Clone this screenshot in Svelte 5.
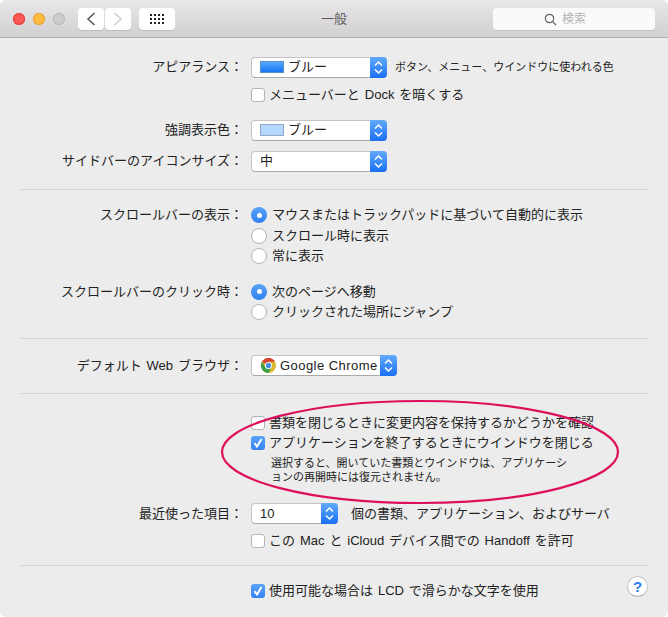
<script>
	const dots = Array.from({ length: 12 });
</script>

{#snippet stepper()}
	<span class="stepper">
		<svg width="9" height="15" viewBox="0 0 9 15" fill="none" stroke="#fff" stroke-width="1.5">
			<path d="M1 5.5 4.5 2 8 5.5M1 9.5 4.5 13 8 9.5" />
		</svg>
	</span>
{/snippet}

{#snippet tick()}
	<svg width="14" height="14" viewBox="0 0 14 14" fill="none" stroke="#fff" stroke-width="2">
		<path d="M3.5 7.2 6 10.5 10.5 3" />
	</svg>
{/snippet}

<div class="window">
	<header class="titlebar">
		<div class="lights">
			<span class="light red"></span>
			<span class="light yellow"></span>
			<span class="light off"></span>
		</div>
		<div class="nav">
			<button class="tool" aria-label="戻る">
				<svg width="10" height="16" viewBox="0 0 10 16" fill="none" stroke="#555" stroke-width="1.5"><path d="M8.5 2 2 8l6.5 6" /></svg>
			</button>
			<button class="tool" aria-label="進む">
				<svg width="10" height="16" viewBox="0 0 10 16" fill="none" stroke="#ccc" stroke-width="1.5"><path d="M1.5 2 8 8l-6.5 6" /></svg>
			</button>
		</div>
		<button class="tool apps" aria-label="すべて表示">
			<span class="dots">
				{#each dots as _}<i></i>{/each}
			</span>
		</button>
		<div class="title">一般</div>
		<div class="search">
			<svg width="13" height="13" viewBox="0 0 13 13" fill="none" stroke="#666" stroke-width="1.2"><circle cx="5.5" cy="5.5" r="4.2" /><path d="M8.6 8.6 12 12" /></svg>
			<span>検索</span>
		</div>
	</header>

	<section class="s1">
		<div class="row">
			<div class="label">アピアランス：</div>
			<div class="control">
				<div class="select w136">
					<span class="swatch blue"></span><span class="value">ブルー</span>
					{@render stepper()}
				</div>
				<span class="hint">ボタン、メニュー、ウインドウに使われる色</span>
			</div>
		</div>
		<div class="row mt6">
			<div></div>
			<label class="control check">
				<span class="box"></span>メニューバーと Dock を暗くする
			</label>
		</div>
		<div class="row mt13">
			<div class="label">強調表示色：</div>
			<div class="control">
				<div class="select w136">
					<span class="swatch pale"></span><span class="value">ブルー</span>
					{@render stepper()}
				</div>
			</div>
		</div>
		<div class="row mt9">
			<div class="label">サイドバーのアイコンサイズ：</div>
			<div class="control">
				<div class="select w136">
					<span class="value">中</span>
					{@render stepper()}
				</div>
			</div>
		</div>
	</section>

	<section class="s2">
		<div class="row tight">
			<div class="label">スクロールバーの表示：</div>
			<div class="control radio"><span class="dot on"></span>マウスまたはトラックパッドに基づいて自動的に表示</div>
		</div>
		<div class="row tight">
			<div></div>
			<div class="control radio"><span class="dot"></span>スクロール時に表示</div>
		</div>
		<div class="row tight">
			<div></div>
			<div class="control radio"><span class="dot"></span>常に表示</div>
		</div>
		<div class="row tight mt15">
			<div class="label">スクロールバーのクリック時：</div>
			<div class="control radio"><span class="dot on"></span>次のページへ移動</div>
		</div>
		<div class="row tight">
			<div></div>
			<div class="control radio"><span class="dot"></span>クリックされた場所にジャンプ</div>
		</div>
	</section>

	<section class="s3">
		<div class="row">
			<div class="label">デフォルト Web ブラウザ：</div>
			<div class="control">
				<div class="select w146">
					<svg class="chrome" width="15" height="15" viewBox="0 0 30 30">
						<circle cx="15" cy="15" r="15" fill="#ddb92c" />
						<path d="M15 15 2 7.5A15 15 0 0 1 28 7.5H15Z" fill="#d8402f" />
						<path d="M2 7.5A15 15 0 0 0 15 30L21.5 18.7 15 15 8.5 18.7Z" fill="#3f9e48" />
						<circle cx="15" cy="15" r="7.2" fill="#fff" />
						<circle cx="15" cy="15" r="5.4" fill="#4a8fe0" />
					</svg>
					<span class="value latin">Google Chrome</span>
					{@render stepper()}
				</div>
			</div>
		</div>
	</section>

	<section class="s4">
		<div class="row tight">
			<div></div>
			<label class="control check"><span class="box"></span>書類を閉じるときに変更内容を保持するかどうかを確認</label>
		</div>
		<div class="row tight">
			<div></div>
			<label class="control check"><span class="box on">{@render tick()}</span>アプリケーションを終了するときにウインドウを閉じる</label>
		</div>
		<div class="row tight">
			<div></div>
			<p class="note">選択すると、開いていた書類とウインドウは、アプリケーションの再開時には復元されません。</p>
		</div>
		<div class="row mt19">
			<div class="label">最近使った項目：</div>
			<div class="control">
				<div class="select w87">
					<span class="value">10</span>
					{@render stepper()}
				</div>
				<span class="after">個の書類、アプリケーション、およびサーバ</span>
			</div>
		</div>
		<div class="row mt5">
			<div></div>
			<label class="control check"><span class="box"></span>この Mac と iCloud デバイス間での Handoff を許可</label>
		</div>
	</section>

	<section class="s5">
		<div class="row">
			<div></div>
			<label class="control check"><span class="box on">{@render tick()}</span>使用可能な場合は LCD で滑らかな文字を使用</label>
		</div>
	</section>

	<button class="help">?</button>

	<svg class="circle" width="668" height="617" viewBox="0 0 668 617" fill="none">
		<ellipse cx="420" cy="452" rx="198" ry="51" stroke="#dd0f5c" stroke-width="2.2" />
	</svg>
</div>

<style>
	:global(body) {
		background: #fff;
	}
	.window {
		position: relative;
		width: 668px;
		height: 617px;
		box-sizing: border-box;
		background: #ececec;
		border-radius: 6px;
		overflow: hidden;
		color: #222;
		font: 13px/20px 'Liberation Sans', 'Noto Sans CJK JP', sans-serif;
		word-spacing: 1.3px;
	}
	.titlebar {
		height: 37px;
		display: flex;
		align-items: center;
		position: relative;
		padding: 0 13px;
		background: linear-gradient(#e9e7e9, #d1cfd1);
		border-bottom: 1px solid #b2b0b2;
	}
	.lights {
		display: flex;
		gap: 8px;
		width: 65px;
	}
	.light {
		width: 12px;
		height: 12px;
		border-radius: 50%;
	}
	.red {
		background: #fc5753;
		box-shadow: inset 0 0 0 1px #e33e3a;
	}
	.yellow {
		background: #fdbc40;
		box-shadow: inset 0 0 0 1px #e0a032;
	}
	.off {
		background: #cdcbcd;
		box-shadow: inset 0 0 0 1px #bbb9bb;
	}
	.nav {
		display: flex;
		gap: 1px;
		margin-right: 8px;
	}
	.tool {
		width: 26px;
		height: 22px;
		padding: 0;
		border: 0;
		border-radius: 4px;
		background: #fff;
		box-shadow: 0 1px 0 #bdbbbd;
		display: flex;
		align-items: center;
		justify-content: center;
	}
	.apps {
		width: 36px;
	}
	.dots {
		display: grid;
		grid-template-columns: repeat(4, 2px);
		gap: 2px 2px;
	}
	.dots i {
		width: 2px;
		height: 2px;
		background: #222;
	}
	.title {
		position: absolute;
		left: 0;
		right: 0;
		text-align: center;
		color: #5c5a5c;
	}
	.search {
		position: absolute;
		left: 493px;
		top: 8px;
		width: 162px;
		height: 22px;
		box-sizing: border-box;
		padding-right: 18px;
		border-radius: 4px;
		background: #fbfafb;
		box-shadow: 0 1px 0 #c2c0c2;
		display: flex;
		align-items: center;
		justify-content: center;
		gap: 5px;
		font-size: 12px;
		color: #b5b5b5;
	}
	section {
		margin: 0 20px;
		border-bottom: 1px solid #d5d5d5;
	}
	.s1 {
		padding: 18px 0 17px;
	}
	.s2 {
		padding: 15px 0 15px;
	}
	.s3 {
		padding: 16px 0 16px;
	}
	.s4 {
		padding: 19px 0 13px;
	}
	.s5 {
		padding: 14px 0 0;
		border-bottom: 0;
	}
	.row {
		display: grid;
		grid-template-columns: 223px 1fr;
		column-gap: 8px;
		min-height: 22px;
		align-items: center;
	}
	.tight {
		min-height: 20.5px;
	}
	.mt5 {
		margin-top: 5px;
	}
	.mt6 {
		margin-top: 6px;
	}
	.mt9 {
		margin-top: 9px;
	}
	.mt13 {
		margin-top: 13px;
	}
	.mt15 {
		margin-top: 15px;
	}
	.mt19 {
		margin-top: 19px;
	}
	.label {
		text-align: right;
		white-space: nowrap;
	}
	.control {
		display: flex;
		align-items: center;
		white-space: nowrap;
	}
	.select {
		height: 21px;
		box-sizing: border-box;
		display: flex;
		align-items: center;
		position: relative;
		background: #fff;
		border: 1px solid #c4c4c4;
		border-bottom-color: #a9a9a9;
		border-radius: 4px;
		padding-left: 8px;
		flex: none;
	}
	.w136 {
		width: 136px;
	}
	.w146 {
		width: 146px;
	}
	.w87 {
		width: 87px;
	}
	.swatch {
		width: 24px;
		height: 12px;
		box-sizing: border-box;
		margin-right: 4px;
	}
	.blue {
		background: linear-gradient(#58a9fb, #1774f4);
		border: 1px solid #5d8ecb;
	}
	.pale {
		background: #b3d7ff;
		border: 1px solid #93a9c4;
	}
	.latin {
		letter-spacing: 0.45px;
		word-spacing: 0;
	}
	.chrome {
		margin-right: 4px;
		margin-left: 1px;
	}
	.stepper {
		position: absolute;
		right: -1px;
		top: -1px;
		bottom: -1px;
		width: 17px;
		display: flex;
		align-items: center;
		justify-content: center;
		background: linear-gradient(#62aafc, #1a6ff5);
		border-radius: 0 4px 4px 0;
	}
	.hint {
		font-size: 11px;
		margin-left: 8px;
	}
	.after {
		margin-left: 13px;
	}
	.check {
		gap: 4px;
	}
	.box {
		width: 14px;
		height: 14px;
		box-sizing: border-box;
		flex: none;
		background: #fff;
		border: 1px solid #b4b4b4;
		border-radius: 3px;
		display: flex;
		align-items: center;
		justify-content: center;
	}
	.box.on {
		background: linear-gradient(#5ba4f9, #3482f2);
		border: 0;
	}
	.radio {
		gap: 5px;
	}
	.dot {
		width: 16px;
		height: 16px;
		box-sizing: border-box;
		flex: none;
		background: #fff;
		border: 1px solid #b4b4b4;
		border-radius: 50%;
		display: flex;
		align-items: center;
		justify-content: center;
	}
	.dot.on {
		background: linear-gradient(#5ba4f9, #2f7ff2);
		border: 0;
	}
	.dot.on::after {
		content: '';
		width: 5px;
		height: 5px;
		border-radius: 50%;
		background: #fff;
	}
	.note {
		margin: 2px 0 0 20px;
		width: 300px;
		font-size: 11px;
		line-height: 14px;
	}
	.help {
		position: absolute;
		left: 627px;
		top: 576px;
		width: 21px;
		height: 21px;
		padding: 0;
		border: 1px solid #c6c6c6;
		border-bottom-color: #aaa;
		border-radius: 50%;
		background: #fff;
		color: #2b7df0;
		font: bold 15px/19px 'Liberation Sans', sans-serif;
	}
	.circle {
		position: absolute;
		left: 0;
		top: 0;
		pointer-events: none;
	}
</style>
